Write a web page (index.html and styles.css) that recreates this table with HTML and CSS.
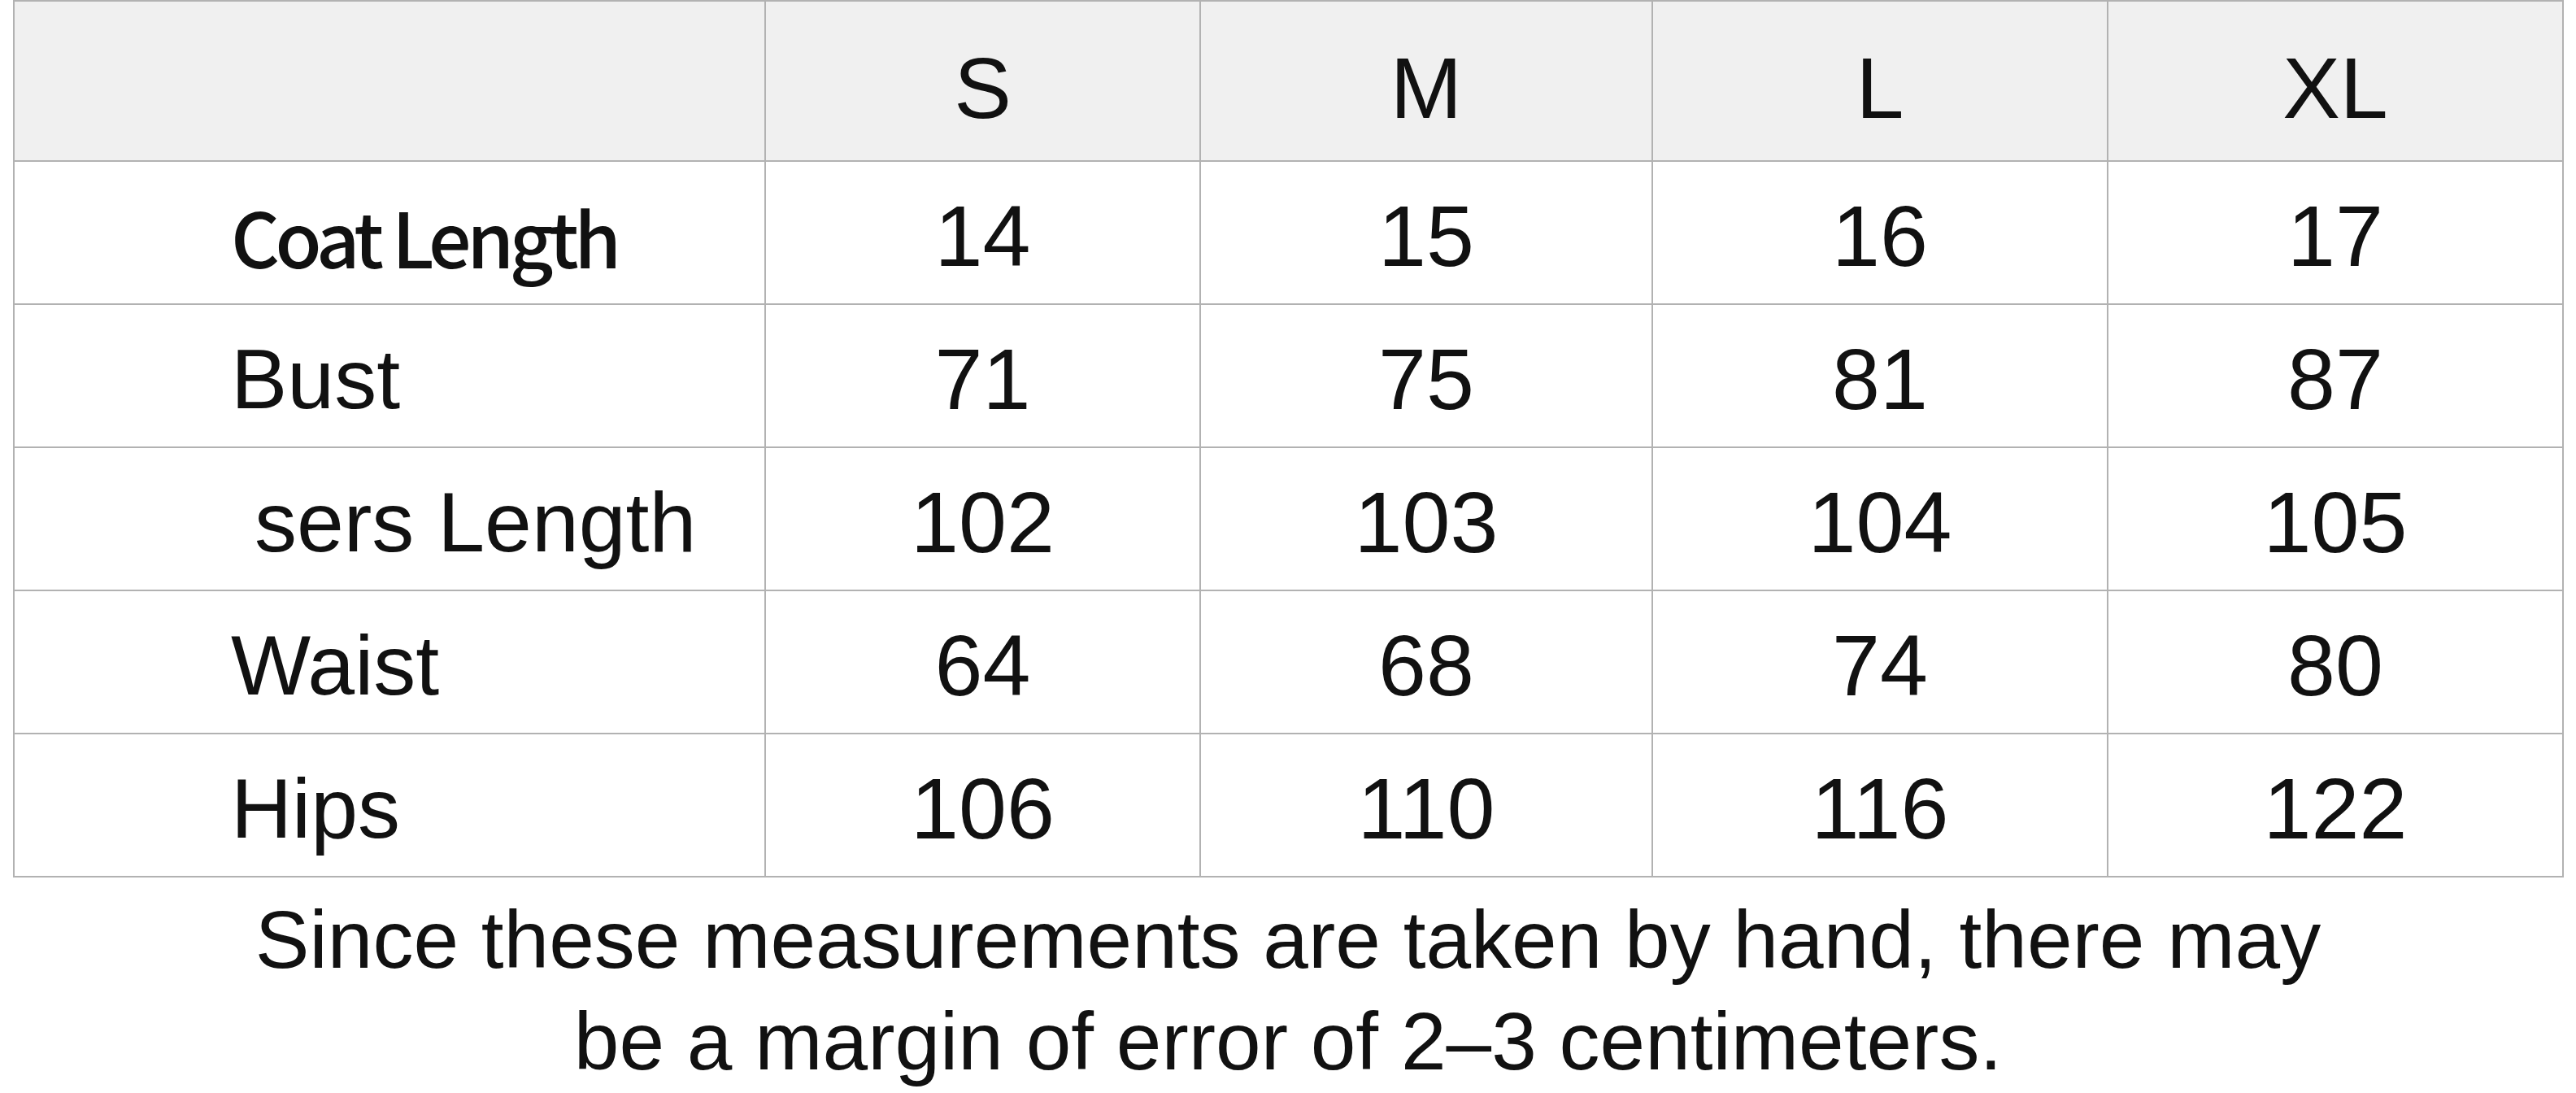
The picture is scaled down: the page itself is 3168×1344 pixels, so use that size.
FILE: index.html
```html
<!DOCTYPE html>
<html lang="en">
<head>
<meta charset="utf-8">
<title>Size Chart</title>
<link rel="stylesheet" href="styles.css">
</head>
<body>
<div class="chart">
  <div class="cell head"></div>
  <div class="cell head num">S</div>
  <div class="cell head num">M</div>
  <div class="cell head num">L</div>
  <div class="cell head num">XL</div>

  <div class="cell label label-alt">Coat Length</div>
  <div class="cell num">14</div>
  <div class="cell num">15</div>
  <div class="cell num">16</div>
  <div class="cell num">17</div>

  <div class="cell label">Bust</div>
  <div class="cell num">71</div>
  <div class="cell num">75</div>
  <div class="cell num">81</div>
  <div class="cell num">87</div>

  <div class="cell label">&nbsp;sers Length</div>
  <div class="cell num">102</div>
  <div class="cell num">103</div>
  <div class="cell num">104</div>
  <div class="cell num">105</div>

  <div class="cell label">Waist</div>
  <div class="cell num">64</div>
  <div class="cell num">68</div>
  <div class="cell num">74</div>
  <div class="cell num">80</div>

  <div class="cell label">Hips</div>
  <div class="cell num">106</div>
  <div class="cell num">110</div>
  <div class="cell num">116</div>
  <div class="cell num">122</div>
</div>
<p class="note">Since these measurements are taken by hand, there may<br>be a margin of error of 2–3 centimeters.</p>
</body>
</html>
```

FILE: styles.css
```css
html, body {
  margin: 0;
  padding: 0;
  background: #ffffff;
}

body {
  width: 3168px;
  font-family: "Liberation Sans", Arial, sans-serif;
  color: #111111;
}

.chart {
  margin-left: 16px;
  width: 3137px;
  display: grid;
  grid-template-columns: 922px 533px 554px 558px 558px;
  grid-template-rows: 195px repeat(5, 174px);
  gap: 2px;
  padding: 2px;
  box-sizing: border-box;
  background: #b2b2b2;
}

.cell {
  background: #ffffff;
  display: flex;
  align-items: center;
  box-sizing: border-box;
  padding-top: 9px;
  font-size: 106px;
  white-space: pre;
}

.cell.head {
  background: #f0f0f0;
  padding-top: 18px;
}

.num {
  justify-content: center;
}

.label {
  padding-left: 266px;
  font-size: 104px;
}

.label-alt {
  font-family: "Noto Sans CJK SC", "Noto Sans", sans-serif;
  font-weight: 500;
  font-size: 93px;
  letter-spacing: -5.5px;
  padding-top: 6px;
}

.note {
  margin: 14px 0 0;
  text-align: center;
  font-size: 100px;
  line-height: 125px;
  color: #111111;
}
```
